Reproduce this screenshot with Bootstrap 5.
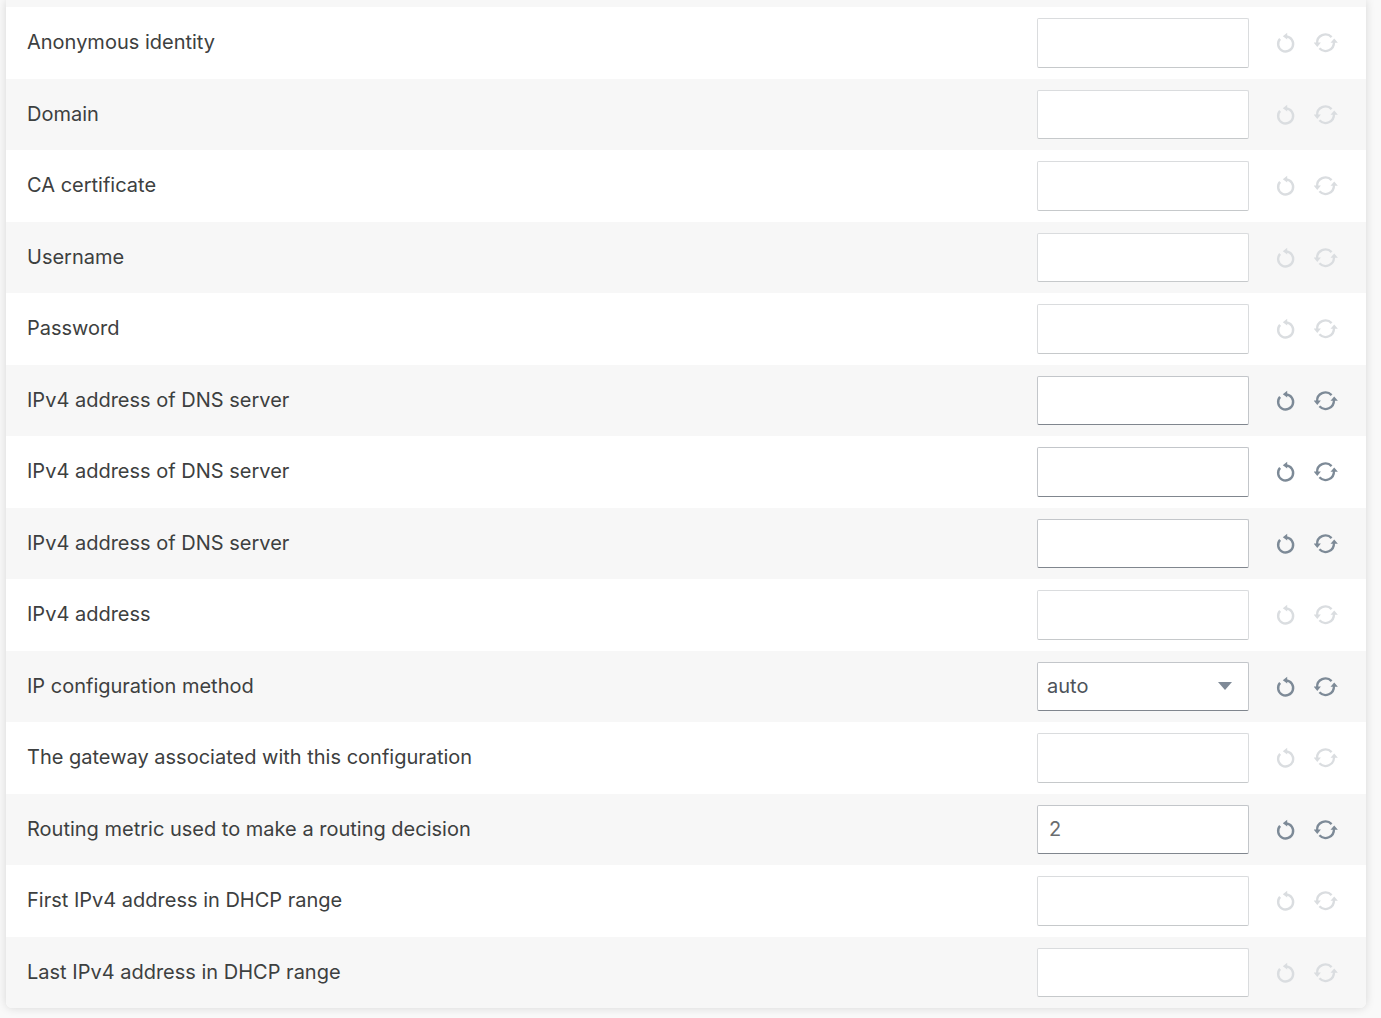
<!DOCTYPE html>
<html lang="en">
<head>
<meta charset="utf-8">
<meta name="viewport" content="width=device-width, initial-scale=1">
<title>Network settings</title>
<link href="https://cdn.jsdelivr.net/npm/bootstrap@5.3.0/dist/css/bootstrap.min.css" rel="stylesheet">
<style>
body{background:#f9f9f9;font-family:Inter,"Liberation Sans",sans-serif;font-size:20px;color:#3d4040}
.settings-page{padding:0 15px 10px 6px}
.settings-panel{border:0;border-radius:0 0 6px 6px;background:#fff;box-shadow:0 0 10px rgba(0,0,0,.14);overflow:hidden}
.panel-strip{height:7px;background:#f7f7f7}
.setting-row{padding:11px 28px 11px 21px}
.setting-row:nth-child(even){background:#f7f7f7}
.setting-row label{line-height:48px}
.setting-row .form-control,.setting-row .form-select{width:212px;height:50px;padding:0 11px 2px;font-size:20px;line-height:28px;color:#6a6d70;background-color:#fff;border:1px solid #c3c6ca;border-bottom-color:#80868e;border-radius:2px}
.setting-row:nth-child(even) .form-control,.setting-row:nth-child(even) .form-select{height:49px}
.setting-row .form-control:disabled{border-color:#dadcde;border-bottom-color:#c6c9cb}
.setting-row .form-select{padding:0 36px 2px 9px;color:#4d535a;background-image:url("data:image/svg+xml,%3Csvg xmlns='http://www.w3.org/2000/svg' viewBox='0 0 14 8'%3E%3Cpath fill='%237f8a97' d='M0 0h14L7 8z'/%3E%3C/svg%3E");background-size:14px 8px;background-position:right 16px top 19px}
.row-tools{gap:16px;padding:13px 0 0 25px}
.tool-btn{width:24px;height:24px;padding:0;border:0;color:#7d8a97;line-height:1}
.tool-btn:disabled{border:0;color:#dadde0;opacity:1}
.tool-btn svg{display:block;width:24px;height:24px}
</style>
</head>
<body>
<svg class="d-none" aria-hidden="true">
<symbol id="undo" viewBox="0 0 24 24"><path d="M6.1 7.9A7.5 7.5 0 1 0 12.4 5.5" fill="none" stroke="currentColor" stroke-width="2.4"/><path d="M13.2 1.8v6.8L8.8 5.2z" fill="currentColor"/></symbol>
<symbol id="sync" viewBox="0 0 24 24"><path d="M3.1 12.4A8.4 8.4 0 0 1 17.6 6.1M19.9 11A8.4 8.4 0 0 1 5.4 17.3" fill="none" stroke="currentColor" stroke-width="2.3"/><path d="M-.3 11.6h7.2L3.3 15.9zM16.5 11.8h7.4L20.2 7.4z" fill="currentColor"/></symbol>
</svg>
<main class="settings-page">
<div class="card settings-panel">
<div class="panel-strip"></div>
<form id="settings">
<div class="setting-row d-flex align-items-start"><label class="flex-grow-1" for="f1">Anonymous identity</label><input class="form-control" id="f1" type="text" disabled><div class="row-tools d-flex"><button class="btn tool-btn" type="button" aria-label="Undo" disabled><svg><use href="#undo"/></svg></button><button class="btn tool-btn" type="button" aria-label="Refresh" disabled><svg><use href="#sync"/></svg></button></div></div>
<div class="setting-row d-flex align-items-start"><label class="flex-grow-1" for="f2">Domain</label><input class="form-control" id="f2" type="text" disabled><div class="row-tools d-flex"><button class="btn tool-btn" type="button" aria-label="Undo" disabled><svg><use href="#undo"/></svg></button><button class="btn tool-btn" type="button" aria-label="Refresh" disabled><svg><use href="#sync"/></svg></button></div></div>
<div class="setting-row d-flex align-items-start"><label class="flex-grow-1" for="f3">CA certificate</label><input class="form-control" id="f3" type="text" disabled><div class="row-tools d-flex"><button class="btn tool-btn" type="button" aria-label="Undo" disabled><svg><use href="#undo"/></svg></button><button class="btn tool-btn" type="button" aria-label="Refresh" disabled><svg><use href="#sync"/></svg></button></div></div>
<div class="setting-row d-flex align-items-start"><label class="flex-grow-1" for="f4">Username</label><input class="form-control" id="f4" type="text" disabled><div class="row-tools d-flex"><button class="btn tool-btn" type="button" aria-label="Undo" disabled><svg><use href="#undo"/></svg></button><button class="btn tool-btn" type="button" aria-label="Refresh" disabled><svg><use href="#sync"/></svg></button></div></div>
<div class="setting-row d-flex align-items-start"><label class="flex-grow-1" for="f5">Password</label><input class="form-control" id="f5" type="password" autocomplete="off" disabled><div class="row-tools d-flex"><button class="btn tool-btn" type="button" aria-label="Undo" disabled><svg><use href="#undo"/></svg></button><button class="btn tool-btn" type="button" aria-label="Refresh" disabled><svg><use href="#sync"/></svg></button></div></div>
<div class="setting-row d-flex align-items-start"><label class="flex-grow-1" for="f6">IPv4 address of DNS server</label><input class="form-control" id="f6" type="text"><div class="row-tools d-flex"><button class="btn tool-btn" type="button" aria-label="Undo"><svg><use href="#undo"/></svg></button><button class="btn tool-btn" type="button" aria-label="Refresh"><svg><use href="#sync"/></svg></button></div></div>
<div class="setting-row d-flex align-items-start"><label class="flex-grow-1" for="f7">IPv4 address of DNS server</label><input class="form-control" id="f7" type="text"><div class="row-tools d-flex"><button class="btn tool-btn" type="button" aria-label="Undo"><svg><use href="#undo"/></svg></button><button class="btn tool-btn" type="button" aria-label="Refresh"><svg><use href="#sync"/></svg></button></div></div>
<div class="setting-row d-flex align-items-start"><label class="flex-grow-1" for="f8">IPv4 address of DNS server</label><input class="form-control" id="f8" type="text"><div class="row-tools d-flex"><button class="btn tool-btn" type="button" aria-label="Undo"><svg><use href="#undo"/></svg></button><button class="btn tool-btn" type="button" aria-label="Refresh"><svg><use href="#sync"/></svg></button></div></div>
<div class="setting-row d-flex align-items-start"><label class="flex-grow-1" for="f9">IPv4 address</label><input class="form-control" id="f9" type="text" disabled><div class="row-tools d-flex"><button class="btn tool-btn" type="button" aria-label="Undo" disabled><svg><use href="#undo"/></svg></button><button class="btn tool-btn" type="button" aria-label="Refresh" disabled><svg><use href="#sync"/></svg></button></div></div>
<div class="setting-row d-flex align-items-start"><label class="flex-grow-1" for="f10">IP configuration method</label><select class="form-select" id="f10"><option>auto</option></select><div class="row-tools d-flex"><button class="btn tool-btn" type="button" aria-label="Undo"><svg><use href="#undo"/></svg></button><button class="btn tool-btn" type="button" aria-label="Refresh"><svg><use href="#sync"/></svg></button></div></div>
<div class="setting-row d-flex align-items-start"><label class="flex-grow-1" for="f11">The gateway associated with this configuration</label><input class="form-control" id="f11" type="text" disabled><div class="row-tools d-flex"><button class="btn tool-btn" type="button" aria-label="Undo" disabled><svg><use href="#undo"/></svg></button><button class="btn tool-btn" type="button" aria-label="Refresh" disabled><svg><use href="#sync"/></svg></button></div></div>
<div class="setting-row d-flex align-items-start"><label class="flex-grow-1" for="f12">Routing metric used to make a routing decision</label><input class="form-control" id="f12" type="text" value="2"><div class="row-tools d-flex"><button class="btn tool-btn" type="button" aria-label="Undo"><svg><use href="#undo"/></svg></button><button class="btn tool-btn" type="button" aria-label="Refresh"><svg><use href="#sync"/></svg></button></div></div>
<div class="setting-row d-flex align-items-start"><label class="flex-grow-1" for="f13">First IPv4 address in DHCP range</label><input class="form-control" id="f13" type="text" disabled><div class="row-tools d-flex"><button class="btn tool-btn" type="button" aria-label="Undo" disabled><svg><use href="#undo"/></svg></button><button class="btn tool-btn" type="button" aria-label="Refresh" disabled><svg><use href="#sync"/></svg></button></div></div>
<div class="setting-row d-flex align-items-start"><label class="flex-grow-1" for="f14">Last IPv4 address in DHCP range</label><input class="form-control" id="f14" type="text" disabled><div class="row-tools d-flex"><button class="btn tool-btn" type="button" aria-label="Undo" disabled><svg><use href="#undo"/></svg></button><button class="btn tool-btn" type="button" aria-label="Refresh" disabled><svg><use href="#sync"/></svg></button></div></div>
</form>
</div>
</main>
<script src="https://cdn.jsdelivr.net/npm/bootstrap@5.3.0/dist/js/bootstrap.bundle.min.js"></script>
</body>
</html>
